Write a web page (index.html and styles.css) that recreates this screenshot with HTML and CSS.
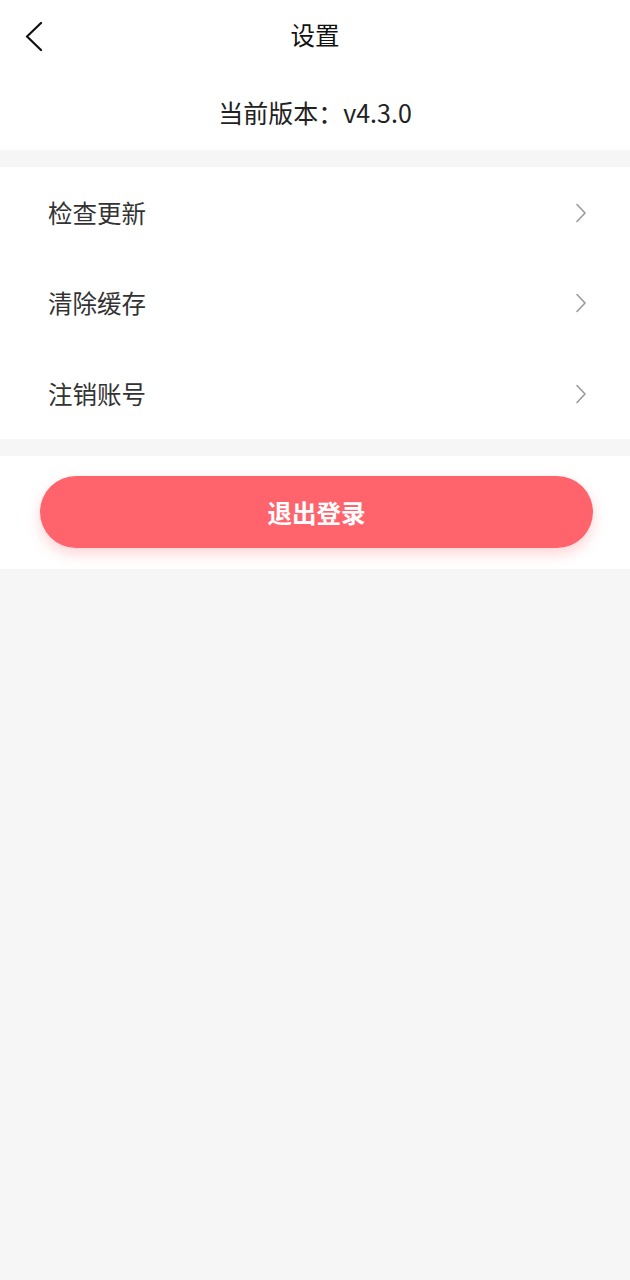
FILE: index.html
```html
<!DOCTYPE html>
<html lang="zh-CN">
<head>
<meta charset="utf-8">
<link rel="stylesheet" href="styles.css">
</head>
<body>
<div class="page">
  <header class="top">
    <div class="navbar">
      <span class="back">
        <svg width="20" height="30" viewBox="0 0 20 30"><path d="M16 1 L2 14.5 L16 28" fill="none" stroke="#111" stroke-width="2.2" stroke-linecap="round" stroke-linejoin="round"/></svg>
      </span>
      <h1 class="title">设置</h1>
    </div>
    <div class="version">当前版本：v4.3.0</div>
  </header>
  <ul class="list">
    <li class="row"><span>检查更新</span><svg class="arrow" width="12" height="20" viewBox="0 0 12 20"><path d="M2 1.5 L10 10 L2 18.5" fill="none" stroke="#9a9a9a" stroke-width="1.6" stroke-linecap="round" stroke-linejoin="round"/></svg></li>
    <li class="row"><span>清除缓存</span><svg class="arrow" width="12" height="20" viewBox="0 0 12 20"><path d="M2 1.5 L10 10 L2 18.5" fill="none" stroke="#9a9a9a" stroke-width="1.6" stroke-linecap="round" stroke-linejoin="round"/></svg></li>
    <li class="row"><span>注销账号</span><svg class="arrow" width="12" height="20" viewBox="0 0 12 20"><path d="M2 1.5 L10 10 L2 18.5" fill="none" stroke="#9a9a9a" stroke-width="1.6" stroke-linecap="round" stroke-linejoin="round"/></svg></li>
  </ul>
  <div class="logout-wrap">
    <button class="logout">退出登录</button>
  </div>
</div>
</body>
</html>
```

FILE: styles.css
```css
* { box-sizing: border-box; }
html, body {
  margin: 0;
  padding: 0;
  background: #f6f6f6;
  font-family: "Noto Sans CJK SC", "Noto Sans", sans-serif;
}
.page {
  width: 630px;
  min-height: 1280px;
  background: #f6f6f6;
}
.top {
  background: #fff;
  height: 150px;
  margin-bottom: 17px;
}
.navbar {
  position: relative;
  height: 70px;
  display: flex;
  align-items: center;
  justify-content: center;
}
.back {
  position: absolute;
  left: 25px;
  top: 22px;
  display: flex;
}
.title {
  margin: 0;
  font-size: 24.5px;
  font-weight: 400;
  color: #111;
  line-height: 1;
}
.version {
  text-align: center;
  font-size: 25px;
  color: #222;
  line-height: 1;
  padding-top: 30px;
}
.list {
  list-style: none;
  margin: 0 0 17px;
  padding: 0;
  background: #fff;
  height: 272px;
  display: flex;
  flex-direction: column;
  justify-content: flex-start;
  padding-top: 1px;
}
.row {
  height: 91px;
  display: flex;
  align-items: center;
  justify-content: space-between;
  padding: 0 43px 0 48px;
  font-size: 24.5px;
  color: #333;
}
.row span { line-height: 1; }
.arrow { display: block; }
.logout-wrap {
  background: #fff;
  height: 113px;
  padding: 20px 37px 0 40px;
}
.logout {
  display: flex;
  align-items: center;
  justify-content: center;
  width: 553px;
  height: 72px;
  border: none;
  border-radius: 36px;
  background: #ff646d;
  color: #fff;
  font-family: "Noto Sans CJK SC", "Noto Sans", sans-serif;
  font-size: 24.5px;
  font-weight: 700;
  box-shadow: 0 6px 14px rgba(255, 100, 109, 0.28);
  padding: 0;
}
```
